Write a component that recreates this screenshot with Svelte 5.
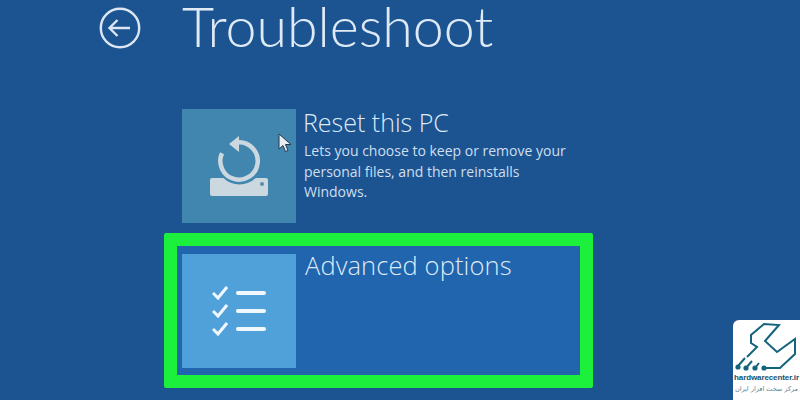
<script>
  let checks = [0, 1, 2];
</script>

<div class="screen">
  <header class="head">
    <svg class="back" viewBox="0 0 42 42" width="42" height="42" fill="none" stroke="#dbe6f2">
      <circle cx="21" cy="21" r="19.2" stroke-width="2.4" />
      <path d="M31 21H10M18.500 13l-8 8 8 8" stroke-width="2.4" />
    </svg>
    <h1>Troubleshoot</h1>
  </header>

  <div class="option">
    <div class="tile reset">
      <svg viewBox="0 0 58 60" width="58" height="60">
        <path d="M29 6.300a18.700 18.700 0 1 1-17 11" fill="none" stroke="#ccd8e0" stroke-width="4.500" />
        <path d="M29 0v16l-10-8z" fill="#ccd8e0" />
        <path d="M2 42H13.300A23.500 23.500 0 0 0 45.700 42H56a2 2 0 0 1 2 2V58a2 2 0 0 1-2 2H2a2 2 0 0 1-2-2V44a2 2 0 0 1 2-2z" fill="#ccd8e0" />
        <circle cx="52" cy="48" r="2" fill="#5d8cab" />
      </svg>
    </div>
    <div class="copy">
      <h2>Reset this PC</h2>
      <p>Lets you choose to keep or remove your<br />personal files, and then reinstalls<br />Windows.</p>
    </div>
    <svg class="cursor" viewBox="0 0 14 20" width="14" height="20">
      <path d="M1 1v15l4-3.500 2.500 6 2.500-1-2.500-6H13z" fill="#e8edf2" stroke="#26384f" />
    </svg>
  </div>

  <div class="picked">
    <div class="tile adv">
      <div class="list">
        {#each checks as c}
          <div class="row">
            <svg viewBox="0 0 16 14" width="16" height="14" fill="none" stroke="#f1f8fd" stroke-width="3">
              <path d="M1 7l5 5 9-11" />
            </svg>
            <span></span>
          </div>
        {/each}
      </div>
    </div>
    <div class="copy">
      <h2 class="wide">Advanced options</h2>
    </div>
  </div>

  <aside class="logo">
    <svg viewBox="0 0 67 50" width="67" height="50" fill="none" stroke="#14647c" stroke-width="2">
      <path d="M32 46H47L62 32V17L44 30 32 19 46 3 31 2 18 13V21L24 25 14 35" />
      <path d="M5 44l7-8M13 46l6-7M22 46l4-5" />
      <circle cx="5" cy="45" r="1.600" fill="#14647c" />
      <circle cx="13" cy="46" r="1.600" fill="#14647c" />
      <circle cx="22" cy="46" r="1.600" fill="#14647c" />
      <circle cx="31" cy="46" r="1.600" fill="#14647c" />
    </svg>
    <strong>hardwarecenter.ir</strong>
    <small>مرکز سخت افزار ایران</small>
  </aside>
</div>

<style>
  :global(body) {
    margin: 0;
  }

  .screen {
    position: relative;
    width: 800px;
    height: 400px;
    overflow: hidden;
    box-sizing: border-box;
    padding-left: 99px;
    background: #1c5492;
    color: #dfeaf5;
    font-family: "Open Sans", "Liberation Sans", sans-serif;
  }

  .head {
    display: flex;
    align-items: flex-start;
    gap: 41px;
    height: 56px;
  }

  .back {
    margin-top: 7px;
  }

  h1 {
    margin: 0;
    font-family: Lato, "Open Sans", sans-serif;
    font-size: 55.500px;
    font-weight: 300;
    line-height: 52px;
  }

  .option {
    position: relative;
    display: flex;
    gap: 7px;
    width: 420px;
    height: 114px;
    margin: 53px 0 0 83px;
  }

  .tile {
    flex: none;
    display: flex;
    align-items: center;
    justify-content: center;
    width: 114px;
    height: 114px;
  }

  .reset {
    background: #4186ae;
  }

  .adv {
    background: #50a0da;
  }

  h2 {
    margin: 0;
    font-size: 25px;
    font-weight: 300;
    line-height: 26px;
  }

  .wide {
    margin-top: -2px;
    font-size: 25.500px;
    letter-spacing: 0.1px;
  }

  p {
    margin: 6px 0 0 1px;
    font-size: 14px;
    line-height: 20.500px;
    color: #cfdfee;
  }

  .cursor {
    position: absolute;
    left: 96px;
    top: 24px;
  }

  .picked {
    display: flex;
    gap: 9px;
    box-sizing: border-box;
    width: 429px;
    height: 155px;
    margin: 10px 0 0 65px;
    padding: 8px 5px;
    border: 13px solid #1cf03c;
    border-radius: 2px;
    background: #2065ae;
  }

  .list {
    display: flex;
    flex-direction: column;
    gap: 4px;
    margin-top: -1px;
  }

  .row {
    display: flex;
    align-items: center;
    gap: 8px;
  }

  .row span {
    width: 30px;
    height: 4px;
    border-radius: 2px;
    background: #f1f8fd;
  }

  .logo {
    position: absolute;
    right: 0;
    bottom: 0;
    display: flex;
    flex-direction: column;
    align-items: center;
    box-sizing: border-box;
    width: 67px;
    height: 80px;
    padding-top: 2px;
    border-radius: 6px 0 0 0;
    background: #fff;
    color: #14536f;
  }

  .logo svg {
    flex: none;
  }

  .logo strong {
    font-family: "Liberation Sans", sans-serif;
    font-size: 8px;
    line-height: 12px;
    letter-spacing: -0.1px;
    white-space: nowrap;
  }

  .logo small {
    font-family: "DejaVu Sans", sans-serif;
    font-size: 6.500px;
    line-height: 11px;
    color: #5b8294;
    white-space: nowrap;
  }
</style>
